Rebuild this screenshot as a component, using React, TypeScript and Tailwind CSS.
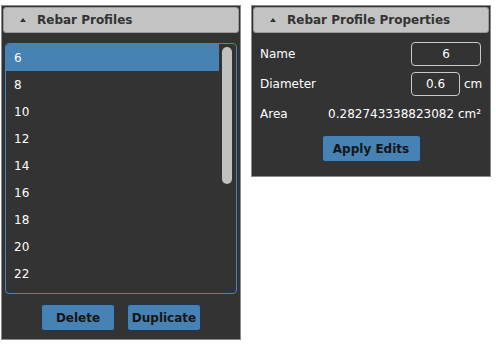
import React from 'react';

// only the rows that fit in the list box are drawn
const profiles = ['6', '8', '10', '12', '14', '16', '18', '20', '22'];

function PanelHeader({ title }: { title: string }) {
  return (
    <div className="h-[26px] flex items-center rounded-[3px] border border-[#9a9a9a] bg-[#c3c3c3] text-[#333] font-bold text-[12px]">
      <svg width="6" height="4" viewBox="0 0 6 4" className="ml-[16px] mr-[11px]">
        <polygon points="3,0 6,4 0,4" fill="#333" />
      </svg>
      <span>{title}</span>
    </div>
  );
}

function Btn({ label, w }: { label: string; w: string }) {
  return (
    <button className={`${w} h-[27px] rounded-[3px] border border-[#1f3650] bg-[#4682b4] text-[#151515] font-bold text-[12px]`}>
      {label}
    </button>
  );
}

export default function App() {
  return (
    <div className="w-[496px] h-[346px] bg-white flex items-start gap-[10px] pl-[1px] pt-[5px] font-['DejaVu_Sans',sans-serif] text-[12px] text-white">
      {/* Rebar Profiles */}
      <div className="w-[240px] h-[335px] border border-[#8a8a8a] bg-[#333333] p-[1px] flex flex-col">
        <PanelHeader title="Rebar Profiles" />
        <div className="mx-[2px] mt-[10px] h-[251px] rounded-[4px] border border-[#4683c0] flex overflow-hidden">
          <div className="flex-1">
            {profiles.map((p, i) => (
              <div
                key={p}
                className={`h-[27px] flex items-center pl-[8px] pt-[1px] ${i === 0 ? 'bg-[#4682b4]' : ''}`}
              >
                {p}
              </div>
            ))}
          </div>
          <div className="w-[17px] pt-[3px] pl-[3px]">
            <div className="w-[10px] h-[137px] rounded-full bg-[#c1c1c1]" />
          </div>
        </div>
        <div className="flex justify-center gap-[12px] mt-[10px]">
          <Btn label="Delete" w="w-[74px]" />
          <Btn label="Duplicate" w="w-[74px]" />
        </div>
      </div>

      {/* Rebar Profile Properties */}
      <div className="w-[240px] h-[172px] border border-[#8a8a8a] bg-[#333333] p-[1px] flex flex-col">
        <PanelHeader title="Rebar Profile Properties" />
        <div className="pl-[7px] pr-[8px] mt-[9px] flex flex-col gap-[6px]">
          <div className="h-[24px] flex items-center justify-between">
            <span>Name</span>
            <div className="w-[70px] h-[24px] rounded-[4px] border border-[#c8c8c8] flex items-center justify-center">6</div>
          </div>
          <div className="h-[24px] flex items-center">
            <span className="flex-1">Diameter</span>
            <div className="w-[49px] h-[24px] rounded-[4px] border border-[#c8c8c8] flex items-center justify-center">0.6</div>
            <span className="ml-[4px] w-[17px]">cm</span>
          </div>
          <div className="h-[24px] flex items-center justify-between">
            <span>Area</span>
            <span>0.282743338823082 cm²</span>
          </div>
        </div>
        <div className="flex justify-center mt-[9px]">
          <Btn label="Apply Edits" w="w-[99px]" />
        </div>
      </div>
    </div>
  );
}
